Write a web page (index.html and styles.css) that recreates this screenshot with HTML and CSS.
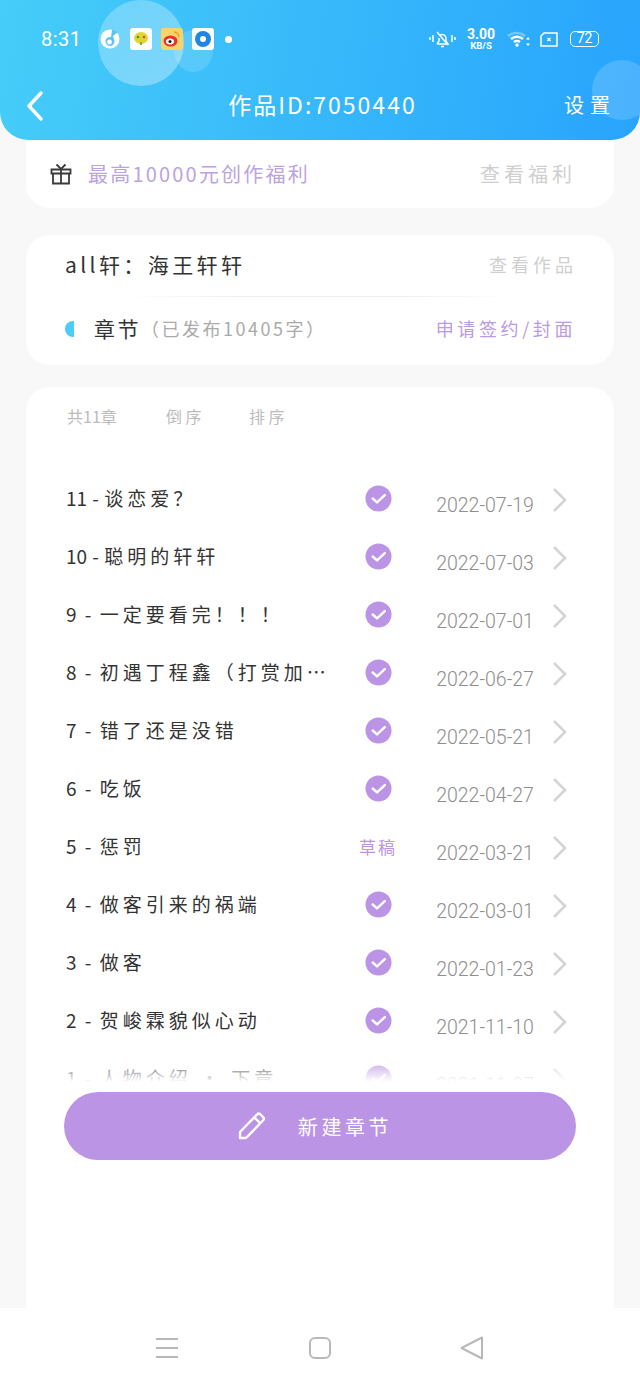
FILE: index.html
```html
<!DOCTYPE html>
<html lang="zh-CN">
<head>
    <meta charset="UTF-8">
    <meta name="viewport" content="width=device-width, initial-scale=1.0">
    <title>作品ID:7050440</title>
    <link rel="stylesheet" href="styles.css">
</head>
<body>
    <div class="page">
        <header class="top">
            <span class="bubble bubble-big"></span>
            <span class="bubble bubble-small"></span>
            <span class="bubble bubble-right"></span>

            <div class="status">
                <div class="status-left">
                    <span class="clock">8:31</span>
                    <svg class="app-round" viewBox="0 0 20 20">
                        <circle cx="10" cy="10" r="9.5" fill="#fff"/>
                        <path d="M12 0.5 L18 3 L13 7 L14.5 12 A4.5 4.5 0 1 1 11 8 z" fill="#5cc4f5"/>
                        <circle cx="9.5" cy="13" r="2.4" fill="#fff"/>
                    </svg>
                    <span class="app-tile tile-white">
                        <svg viewBox="0 0 22 22">
                            <ellipse cx="11" cy="10" rx="7" ry="6" fill="#e3d52f"/>
                            <circle cx="8" cy="9" r="1.3" fill="#3c9a3a"/>
                            <circle cx="14" cy="9" r="1.3" fill="#d8503a"/>
                            <path d="M10 14 h2 v3 h-2z" fill="#7aae3c"/>
                        </svg>
                    </span>
                    <span class="app-tile tile-yellow">
                        <svg viewBox="0 0 22 22">
                            <ellipse cx="9.5" cy="13" rx="7" ry="5.5" fill="#e6322e"/>
                            <ellipse cx="9" cy="13.5" rx="4" ry="3" fill="#fff"/>
                            <circle cx="9" cy="13.5" r="1.6" fill="#222"/>
                            <path d="M13 4 a5 5 0 0 1 5 5" fill="none" stroke="#f09a2a" stroke-width="1.4"/>
                        </svg>
                    </span>
                    <span class="app-tile tile-white">
                        <svg viewBox="0 0 22 22">
                            <circle cx="11" cy="11" r="8" fill="#1f86e6"/>
                            <circle cx="11" cy="11" r="3" fill="#fff"/>
                        </svg>
                    </span>
                    <span class="status-dot"></span>
                </div>
                <div class="status-right">
                    <svg class="ico-bell" viewBox="0 0 27 20" fill="none" stroke="#fff" stroke-width="1.5">
                        <path d="M8 15 h11 l-2 -3 v-3 a4 4 0 0 0 -6 -3 M10 9 v3 l-2 3"/>
                        <path d="M8 3 L19 16"/>
                        <path d="M12 17.5 h3"/>
                        <path d="M1 8 v3 M4 6 v7 M23 6 v7 M26 8 v3"/>
                    </svg>
                    <div class="speed"><b>3.00</b><span>KB/S</span></div>
                    <svg class="ico-wifi" viewBox="0 0 24 18" fill="none" stroke="#fff" stroke-width="2.4">
                        <path d="M1 6 a13 13 0 0 1 17 0" stroke-opacity="0.35"/>
                        <path d="M4 9 a9 9 0 0 1 12 0"/>
                        <path d="M7 12 a5 5 0 0 1 6 0"/>
                        <circle cx="10" cy="15" r="1.7" fill="#fff" stroke="none"/>
                        <path d="M21 7 l2 2.5 h-4z M21 16 l2 -2.5 h-4z" fill="#fff" stroke="none"/>
                    </svg>
                    <svg class="ico-sim" viewBox="0 0 18 15" fill="none" stroke="#fff" stroke-width="1.5">
                        <path d="M4 1 H17 V14 H1 V4z"/>
                        <path d="M7.5 6 l3 3 m0 -3 l-3 3" stroke-width="1.3"/>
                    </svg>
                    <span class="battery">72</span>
                </div>
            </div>

            <div class="titlebar">
                <svg class="ico-back" viewBox="0 0 18 30" fill="none" stroke="#fff" stroke-width="3.4" stroke-linecap="round" stroke-linejoin="round">
                    <path d="M15 2 L3 15 L15 28"/>
                </svg>
                <h1 class="title">作品ID:7050440</h1>
                <a class="settings">设置</a>
            </div>
        </header>

        <section class="card card-welfare">
            <svg class="ico-gift" viewBox="0 0 22 22" fill="none" stroke="#3a3a3a" stroke-width="1.8">
                <path d="M1.5 6.5 H20.5 V10.5 H1.5z"/>
                <path d="M3 10.5 V20.5 H19 V10.5"/>
                <path d="M11 6.5 V20.5"/>
                <path d="M6.5 1.5 L11 6 L15.5 1.5"/>
            </svg>
            <span class="welfare-text">最高10000元创作福利</span>
            <a class="welfare-link">查看福利</a>
        </section>

        <section class="card card-work">
            <div class="work-row">
                <span class="work-name">all轩：海王轩轩</span>
                <a class="work-link">查看作品</a>
            </div>
            <div class="divider"></div>
            <div class="work-row chapter-row">
                <span class="marker"></span>
                <span class="chapter-title">章节</span>
                <span class="chapter-count">（已发布10405字）</span>
                <a class="apply-link">申请签约/封面</a>
            </div>
        </section>

        <section class="card card-list">
            <div class="list-head">
                <span class="head-count">共11章</span>
                <span class="head-item">倒序</span>
                <span class="head-item">排序</span>
            </div>

            <div class="chapters">
                <ul id="chapter-list">
                    <li class="row"><span class="row-title"><span class="num num-two">11 - </span>谈恋爱？</span><span class="state"><svg class="check" viewBox="0 0 28 28"><circle cx="14" cy="14" r="13.5" fill="#bb94e6"/><path d="M8 14 l4.5 4 l8 -7.5" fill="none" stroke="#fff" stroke-width="2.6" stroke-linecap="round" stroke-linejoin="round"/></svg></span><span class="date">2022-07-19</span><svg class="chev" viewBox="0 0 16 26"><path d="M2 2 L13 13 L2 24" fill="none" stroke="#d4d4d4" stroke-width="2.6"/></svg></li>
                    <li class="row"><span class="row-title"><span class="num num-two">10 - </span>聪明的轩轩</span><span class="state"><svg class="check" viewBox="0 0 28 28"><circle cx="14" cy="14" r="13.5" fill="#bb94e6"/><path d="M8 14 l4.5 4 l8 -7.5" fill="none" stroke="#fff" stroke-width="2.6" stroke-linecap="round" stroke-linejoin="round"/></svg></span><span class="date">2022-07-03</span><svg class="chev" viewBox="0 0 16 26"><path d="M2 2 L13 13 L2 24" fill="none" stroke="#d4d4d4" stroke-width="2.6"/></svg></li>
                    <li class="row"><span class="row-title"><span class="num">9 - </span>一定要看完！！！</span><span class="state"><svg class="check" viewBox="0 0 28 28"><circle cx="14" cy="14" r="13.5" fill="#bb94e6"/><path d="M8 14 l4.5 4 l8 -7.5" fill="none" stroke="#fff" stroke-width="2.6" stroke-linecap="round" stroke-linejoin="round"/></svg></span><span class="date">2022-07-01</span><svg class="chev" viewBox="0 0 16 26"><path d="M2 2 L13 13 L2 24" fill="none" stroke="#d4d4d4" stroke-width="2.6"/></svg></li>
                    <li class="row"><span class="row-title"><span class="num">8 - </span>初遇丁程鑫（打赏加…</span><span class="state"><svg class="check" viewBox="0 0 28 28"><circle cx="14" cy="14" r="13.5" fill="#bb94e6"/><path d="M8 14 l4.5 4 l8 -7.5" fill="none" stroke="#fff" stroke-width="2.6" stroke-linecap="round" stroke-linejoin="round"/></svg></span><span class="date">2022-06-27</span><svg class="chev" viewBox="0 0 16 26"><path d="M2 2 L13 13 L2 24" fill="none" stroke="#d4d4d4" stroke-width="2.6"/></svg></li>
                    <li class="row"><span class="row-title"><span class="num">7 - </span>错了还是没错</span><span class="state"><svg class="check" viewBox="0 0 28 28"><circle cx="14" cy="14" r="13.5" fill="#bb94e6"/><path d="M8 14 l4.5 4 l8 -7.5" fill="none" stroke="#fff" stroke-width="2.6" stroke-linecap="round" stroke-linejoin="round"/></svg></span><span class="date">2022-05-21</span><svg class="chev" viewBox="0 0 16 26"><path d="M2 2 L13 13 L2 24" fill="none" stroke="#d4d4d4" stroke-width="2.6"/></svg></li>
                    <li class="row"><span class="row-title"><span class="num">6 - </span>吃饭</span><span class="state"><svg class="check" viewBox="0 0 28 28"><circle cx="14" cy="14" r="13.5" fill="#bb94e6"/><path d="M8 14 l4.5 4 l8 -7.5" fill="none" stroke="#fff" stroke-width="2.6" stroke-linecap="round" stroke-linejoin="round"/></svg></span><span class="date">2022-04-27</span><svg class="chev" viewBox="0 0 16 26"><path d="M2 2 L13 13 L2 24" fill="none" stroke="#d4d4d4" stroke-width="2.6"/></svg></li>
                    <li class="row"><span class="row-title"><span class="num">5 - </span>惩罚</span><span class="state draft">草稿</span><span class="date">2022-03-21</span><svg class="chev" viewBox="0 0 16 26"><path d="M2 2 L13 13 L2 24" fill="none" stroke="#d4d4d4" stroke-width="2.6"/></svg></li>
                    <li class="row"><span class="row-title"><span class="num">4 - </span>做客引来的祸端</span><span class="state"><svg class="check" viewBox="0 0 28 28"><circle cx="14" cy="14" r="13.5" fill="#bb94e6"/><path d="M8 14 l4.5 4 l8 -7.5" fill="none" stroke="#fff" stroke-width="2.6" stroke-linecap="round" stroke-linejoin="round"/></svg></span><span class="date">2022-03-01</span><svg class="chev" viewBox="0 0 16 26"><path d="M2 2 L13 13 L2 24" fill="none" stroke="#d4d4d4" stroke-width="2.6"/></svg></li>
                    <li class="row"><span class="row-title"><span class="num">3 - </span>做客</span><span class="state"><svg class="check" viewBox="0 0 28 28"><circle cx="14" cy="14" r="13.5" fill="#bb94e6"/><path d="M8 14 l4.5 4 l8 -7.5" fill="none" stroke="#fff" stroke-width="2.6" stroke-linecap="round" stroke-linejoin="round"/></svg></span><span class="date">2022-01-23</span><svg class="chev" viewBox="0 0 16 26"><path d="M2 2 L13 13 L2 24" fill="none" stroke="#d4d4d4" stroke-width="2.6"/></svg></li>
                    <li class="row"><span class="row-title"><span class="num">2 - </span>贺峻霖貌似心动</span><span class="state"><svg class="check" viewBox="0 0 28 28"><circle cx="14" cy="14" r="13.5" fill="#bb94e6"/><path d="M8 14 l4.5 4 l8 -7.5" fill="none" stroke="#fff" stroke-width="2.6" stroke-linecap="round" stroke-linejoin="round"/></svg></span><span class="date">2021-11-10</span><svg class="chev" viewBox="0 0 16 26"><path d="M2 2 L13 13 L2 24" fill="none" stroke="#d4d4d4" stroke-width="2.6"/></svg></li>
                    <li class="row"><span class="row-title"><span class="num">1 - </span>人物介绍 · 下章</span><span class="state"><svg class="check" viewBox="0 0 28 28"><circle cx="14" cy="14" r="13.5" fill="#bb94e6"/><path d="M8 14 l4.5 4 l8 -7.5" fill="none" stroke="#fff" stroke-width="2.6" stroke-linecap="round" stroke-linejoin="round"/></svg></span><span class="date">2021-11-07</span><svg class="chev" viewBox="0 0 16 26"><path d="M2 2 L13 13 L2 24" fill="none" stroke="#d4d4d4" stroke-width="2.6"/></svg></li>
                </ul>
                <div class="chapters-fade"></div>
            </div>

            <button class="new-btn">
                <svg class="ico-pencil" viewBox="0 0 28 28" fill="none" stroke="#fff" stroke-width="2.4" stroke-linejoin="round">
                    <path d="M2 20 L19 2.5 a2.5 2.5 0 0 1 3.5 0 L25 5 a2.5 2.5 0 0 1 0 3.5 L8 26 H2z"/>
                    <path d="M16.5 5.5 L22.5 11.5"/>
                </svg>
                <span>新建章节</span>
            </button>
        </section>

        <nav class="navbar">
            <svg class="nav-ico" viewBox="0 0 24 24" fill="none" stroke="#b8b8b8" stroke-width="2">
                <path d="M1 3 H23 M1 12 H23 M1 21 H23"/>
            </svg>
            <svg class="nav-ico" viewBox="0 0 24 24" fill="none" stroke="#b8b8b8" stroke-width="2">
                <rect x="2" y="2" width="20" height="20" rx="5"/>
            </svg>
            <svg class="nav-ico" viewBox="0 0 24 24" fill="none" stroke="#b8b8b8" stroke-width="2" stroke-linejoin="round">
                <path d="M22 1.5 V22.5 L1.5 12z"/>
            </svg>
        </nav>
    </div>
</body>
</html>
```

FILE: styles.css
```css
* {
    box-sizing: border-box;
}

body {
    margin: 0;
    background-color: #f8f8f8;
    font-family: "Noto Sans CJK SC", "Noto Sans", sans-serif;
    color: #333;
}

ul {
    list-style: none;
    margin: 0;
    padding: 0;
}

.page {
    width: 640px;
    height: 1387px;
    display: flex;
    flex-direction: column;
    overflow: hidden;
}

/* Header */
.top {
    position: relative;
    z-index: 2;
    flex: none;
    height: 140px;
    overflow: hidden;
    border-radius: 0 0 28px 28px;
    background: linear-gradient(100deg, #46cdf8 0%, #28a4fd 100%);
    color: #fff;
}

.bubble {
    position: absolute;
    border-radius: 50%;
    background: rgba(255, 255, 255, 0.2);
}

.bubble-big {
    left: 98px;
    top: 0;
    width: 86px;
    height: 86px;
    background: linear-gradient(135deg, rgba(255, 255, 255, 0.24), rgba(255, 255, 255, 0.34));
}

.bubble-small {
    left: 174px;
    top: 30px;
    width: 39px;
    height: 42px;
    background: rgba(255, 255, 255, 0.14);
}

.bubble-right {
    left: 592px;
    top: 60px;
    width: 60px;
    height: 60px;
    background: rgba(255, 255, 255, 0.16);
}

.status {
    position: relative;
    height: 78px;
    display: flex;
    justify-content: space-between;
    align-items: center;
    padding: 0 41px 0 41px;
}

.status-left,
.status-right {
    display: flex;
    align-items: center;
}

.clock {
    width: 59px;
    font-family: "Roboto", sans-serif;
    font-size: 20px;
    letter-spacing: 0.5px;
}

.app-round {
    width: 20px;
    height: 20px;
    margin-right: 10px;
}

.app-tile {
    width: 22px;
    height: 22px;
    margin-right: 9px;
    border-radius: 3px;
    display: block;
}

.app-tile svg {
    display: block;
}

.tile-white {
    background-color: #fff;
}

.tile-yellow {
    background-color: #f6d36b;
}

.status-dot {
    width: 7px;
    height: 7px;
    margin-left: 2px;
    border-radius: 50%;
    background-color: #fff;
}

.ico-bell {
    width: 27px;
    height: 20px;
    margin-right: 9px;
}

.speed {
    width: 32px;
    margin-right: 10px;
    display: flex;
    flex-direction: column;
    align-items: center;
    font-family: "Roboto", sans-serif;
    line-height: 1;
}

.speed b {
    font-size: 14px;
}

.speed span {
    font-size: 9.5px;
    font-weight: 700;
}

.ico-wifi {
    width: 24px;
    height: 18px;
    margin-right: 9px;
}

.ico-sim {
    width: 18px;
    height: 15px;
    margin-right: 12px;
}

.battery {
    width: 29px;
    height: 16px;
    border: 1.5px solid #fff;
    border-radius: 5px;
    font-family: "Roboto", sans-serif;
    font-size: 14px;
    line-height: 13px;
    text-align: center;
}

.titlebar {
    position: relative;
    display: grid;
    grid-template-columns: 1fr auto 1fr;
    align-items: center;
    padding: 0 29px 0 26px;
    height: 56px;
}

.ico-back {
    width: 18px;
    height: 30px;
}

.title {
    margin: 0 0 0 8px;
    padding-bottom: 4px;
    font-size: 23px;
    font-weight: 400;
    letter-spacing: 2px;
    white-space: nowrap;
}

.settings {
    justify-self: end;
    padding-bottom: 4px;
    font-size: 20px;
    letter-spacing: 6px;
    margin-right: -5px;
}

/* Cards */
.card {
    flex: none;
    margin: 0 26px;
    background-color: #fff;
    border-radius: 24px;
}

.card-welfare {
    height: 68px;
    display: flex;
    align-items: center;
    padding: 0 42px 0 24px;
    border-radius: 0 0 24px 24px;
}

.ico-gift {
    width: 22px;
    height: 22px;
    margin-right: 16px;
}

.welfare-text {
    flex: 1;
    padding-bottom: 2px;
    font-size: 20px;
    color: #bba3de;
    letter-spacing: 2.2px;
}

.welfare-link {
    padding-bottom: 2px;
    font-size: 20px;
    color: #cfcfcf;
    letter-spacing: 4px;
    margin-right: -4px;
}

.card-work {
    height: 130px;
    margin-top: 27px;
    padding: 0 41px 0 39px;
}

.work-row {
    display: flex;
    align-items: center;
    height: 61px;
}

.work-name {
    flex: 1;
    padding-bottom: 4px;
    font-size: 21px;
    letter-spacing: 3.4px;
}

.work-link {
    padding-bottom: 4px;
    font-size: 18px;
    color: #cfcfcf;
    letter-spacing: 4px;
    margin-right: -4px;
}

.divider {
    height: 1px;
    margin: 0 60px;
    background: linear-gradient(90deg, #fff, #eeeeee 30%, #eeeeee 70%, #fff);
}

.chapter-row {
    height: 64px;
}

.marker {
    width: 9px;
    height: 16px;
    margin-right: 20px;
    border-radius: 8px 0 0 8px;
    background-color: #4ccdf8;
}

.chapter-title {
    padding-bottom: 2px;
    font-size: 21px;
    letter-spacing: 2.5px;
}

.chapter-count {
    flex: 1;
    padding-bottom: 2px;
    font-size: 18px;
    color: #aaa;
    letter-spacing: 2.5px;
    white-space: nowrap;
}

.apply-link {
    padding-bottom: 2px;
    font-size: 18px;
    color: #bb9ae4;
    letter-spacing: 3.6px;
    margin-right: -3px;
    white-space: nowrap;
}

/* Chapter list */
.card-list {
    flex: 1;
    margin-top: 22px;
    border-radius: 24px 24px 0 0;
    padding: 0 38px;
}

.list-head {
    height: 83px;
    padding: 17px 0 0 3px;
    display: flex;
    font-size: 16px;
    color: #bbb;
    line-height: 24px;
}

.head-count {
    width: 99px;
}

.head-item {
    width: 83px;
    letter-spacing: 3.5px;
}

.chapters {
    position: relative;
    height: 612px;
    overflow: hidden;
}

.row {
    height: 58px;
    display: flex;
    align-items: center;
    padding-left: 2px;
}

.row-title {
    width: 278px;
    padding-bottom: 4px;
    font-size: 19px;
    letter-spacing: 4px;
    white-space: nowrap;
}

.num {
    letter-spacing: 1px;
    word-spacing: 2px;
    white-space: pre;
}

.num-two {
    letter-spacing: 0;
    word-spacing: 1px;
}

.state {
    width: 68px;
    display: flex;
    justify-content: center;
}

.draft {
    padding-bottom: 2px;
    font-size: 17px;
    color: #bb94e6;
    letter-spacing: 2px;
}

.check {
    width: 27px;
    height: 27px;
    margin-bottom: 2px;
}

.date {
    width: 120px;
    margin-left: 13px;
    text-align: center;
    padding-top: 12px;
    font-family: "Roboto", sans-serif;
    font-weight: 300;
    font-size: 19.5px;
    color: #8e8e8e;
}

.chev {
    width: 16px;
    height: 26px;
    margin-left: 7px;
    margin-top: 2px;
}

.chapters-fade {
    position: absolute;
    left: 0;
    right: 0;
    bottom: 0;
    height: 26px;
    background: linear-gradient(rgba(255, 255, 255, 0), #fff);
}

.new-btn {
    display: flex;
    align-items: center;
    justify-content: center;
    width: 512px;
    height: 68px;
    margin-top: 10px;
    padding: 0 10px 0 0;
    border: none;
    border-radius: 34px;
    background-color: #bc94e6;
    color: #fff;
    font-family: inherit;
    font-size: 20px;
    letter-spacing: 3.6px;
}

.ico-pencil {
    width: 28px;
    height: 28px;
    margin-right: 32px;
}

/* System nav */
.navbar {
    flex: none;
    height: 79px;
    padding: 0 156px 0 155px;
    display: flex;
    justify-content: space-between;
    align-items: center;
    background-color: #fff;
}

.nav-ico {
    width: 24px;
    height: 24px;
    margin-top: 1px;
}
```
